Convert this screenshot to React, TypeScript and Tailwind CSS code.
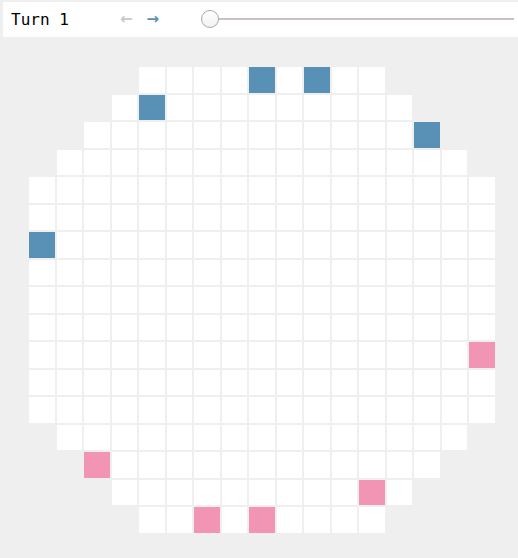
import React from "react";

const rowRanges: [number, number][] = [
  [4, 12], [3, 13], [2, 14], [1, 15],
  [0, 16], [0, 16], [0, 16], [0, 16], [0, 16], [0, 16], [0, 16], [0, 16], [0, 16],
  [1, 15], [2, 14], [3, 13], [4, 12],
];

const blue: Record<string, boolean> = { "0-8": true, "0-10": true, "1-4": true, "2-14": true, "6-0": true };
const pink: Record<string, boolean> = { "10-16": true, "14-2": true, "15-12": true, "16-6": true, "16-8": true };

export default function App() {
  const cells: React.ReactNode[] = [];
  for (let r = 0; r < 17; r++) {
    for (let c = 0; c < 17; c++) {
      const [a, b] = rowRanges[r];
      const key = `${r}-${c}`;
      let cls = "";
      if (c >= a && c <= b) {
        if (blue[key]) cls = "bg-[#5991b6]";
        else if (pink[key]) cls = "bg-[#f294b3]";
        else cls = "bg-white";
      }
      cells.push(<div key={key} className={cls} />);
    }
  }
  return (
    <div className="w-[518px] h-[558px] bg-[#efefef] overflow-hidden">
      <div className="ml-[3px] pt-[2px]">
        <div className="h-[35px] bg-white flex items-center">
          <span
            className="ml-[8px] w-[109px] text-[16px] text-black leading-none"
            style={{ fontFamily: '"DejaVu Sans Mono", monospace' }}
          >
            Turn 1
          </span>
          <span className="text-[15px] text-[#c8c8c8] leading-none font-bold" style={{ fontFamily: '"DejaVu Sans", sans-serif' }}>←</span>
          <span className="ml-[14px] text-[15px] text-[#5991b6] leading-none font-bold" style={{ fontFamily: '"DejaVu Sans", sans-serif' }}>→</span>
          <div className="relative ml-[42px] mr-[4px] flex-1 h-[20px] flex items-center">
            <div className="w-full h-[2px] bg-[#c9c2be] mt-[-2px]" />
            <div className="absolute left-0 top-[0px] w-[18px] h-[18px] rounded-full border border-[#a9a9a9] bg-gradient-to-b from-white to-[#f2f2f2]" />
          </div>
        </div>
      </div>
      <div className="mt-[30px] ml-[29px] grid grid-cols-[repeat(17,25.5px)] grid-rows-[repeat(17,25.5px)] gap-[2px]">
        {cells}
      </div>
    </div>
  );
}
